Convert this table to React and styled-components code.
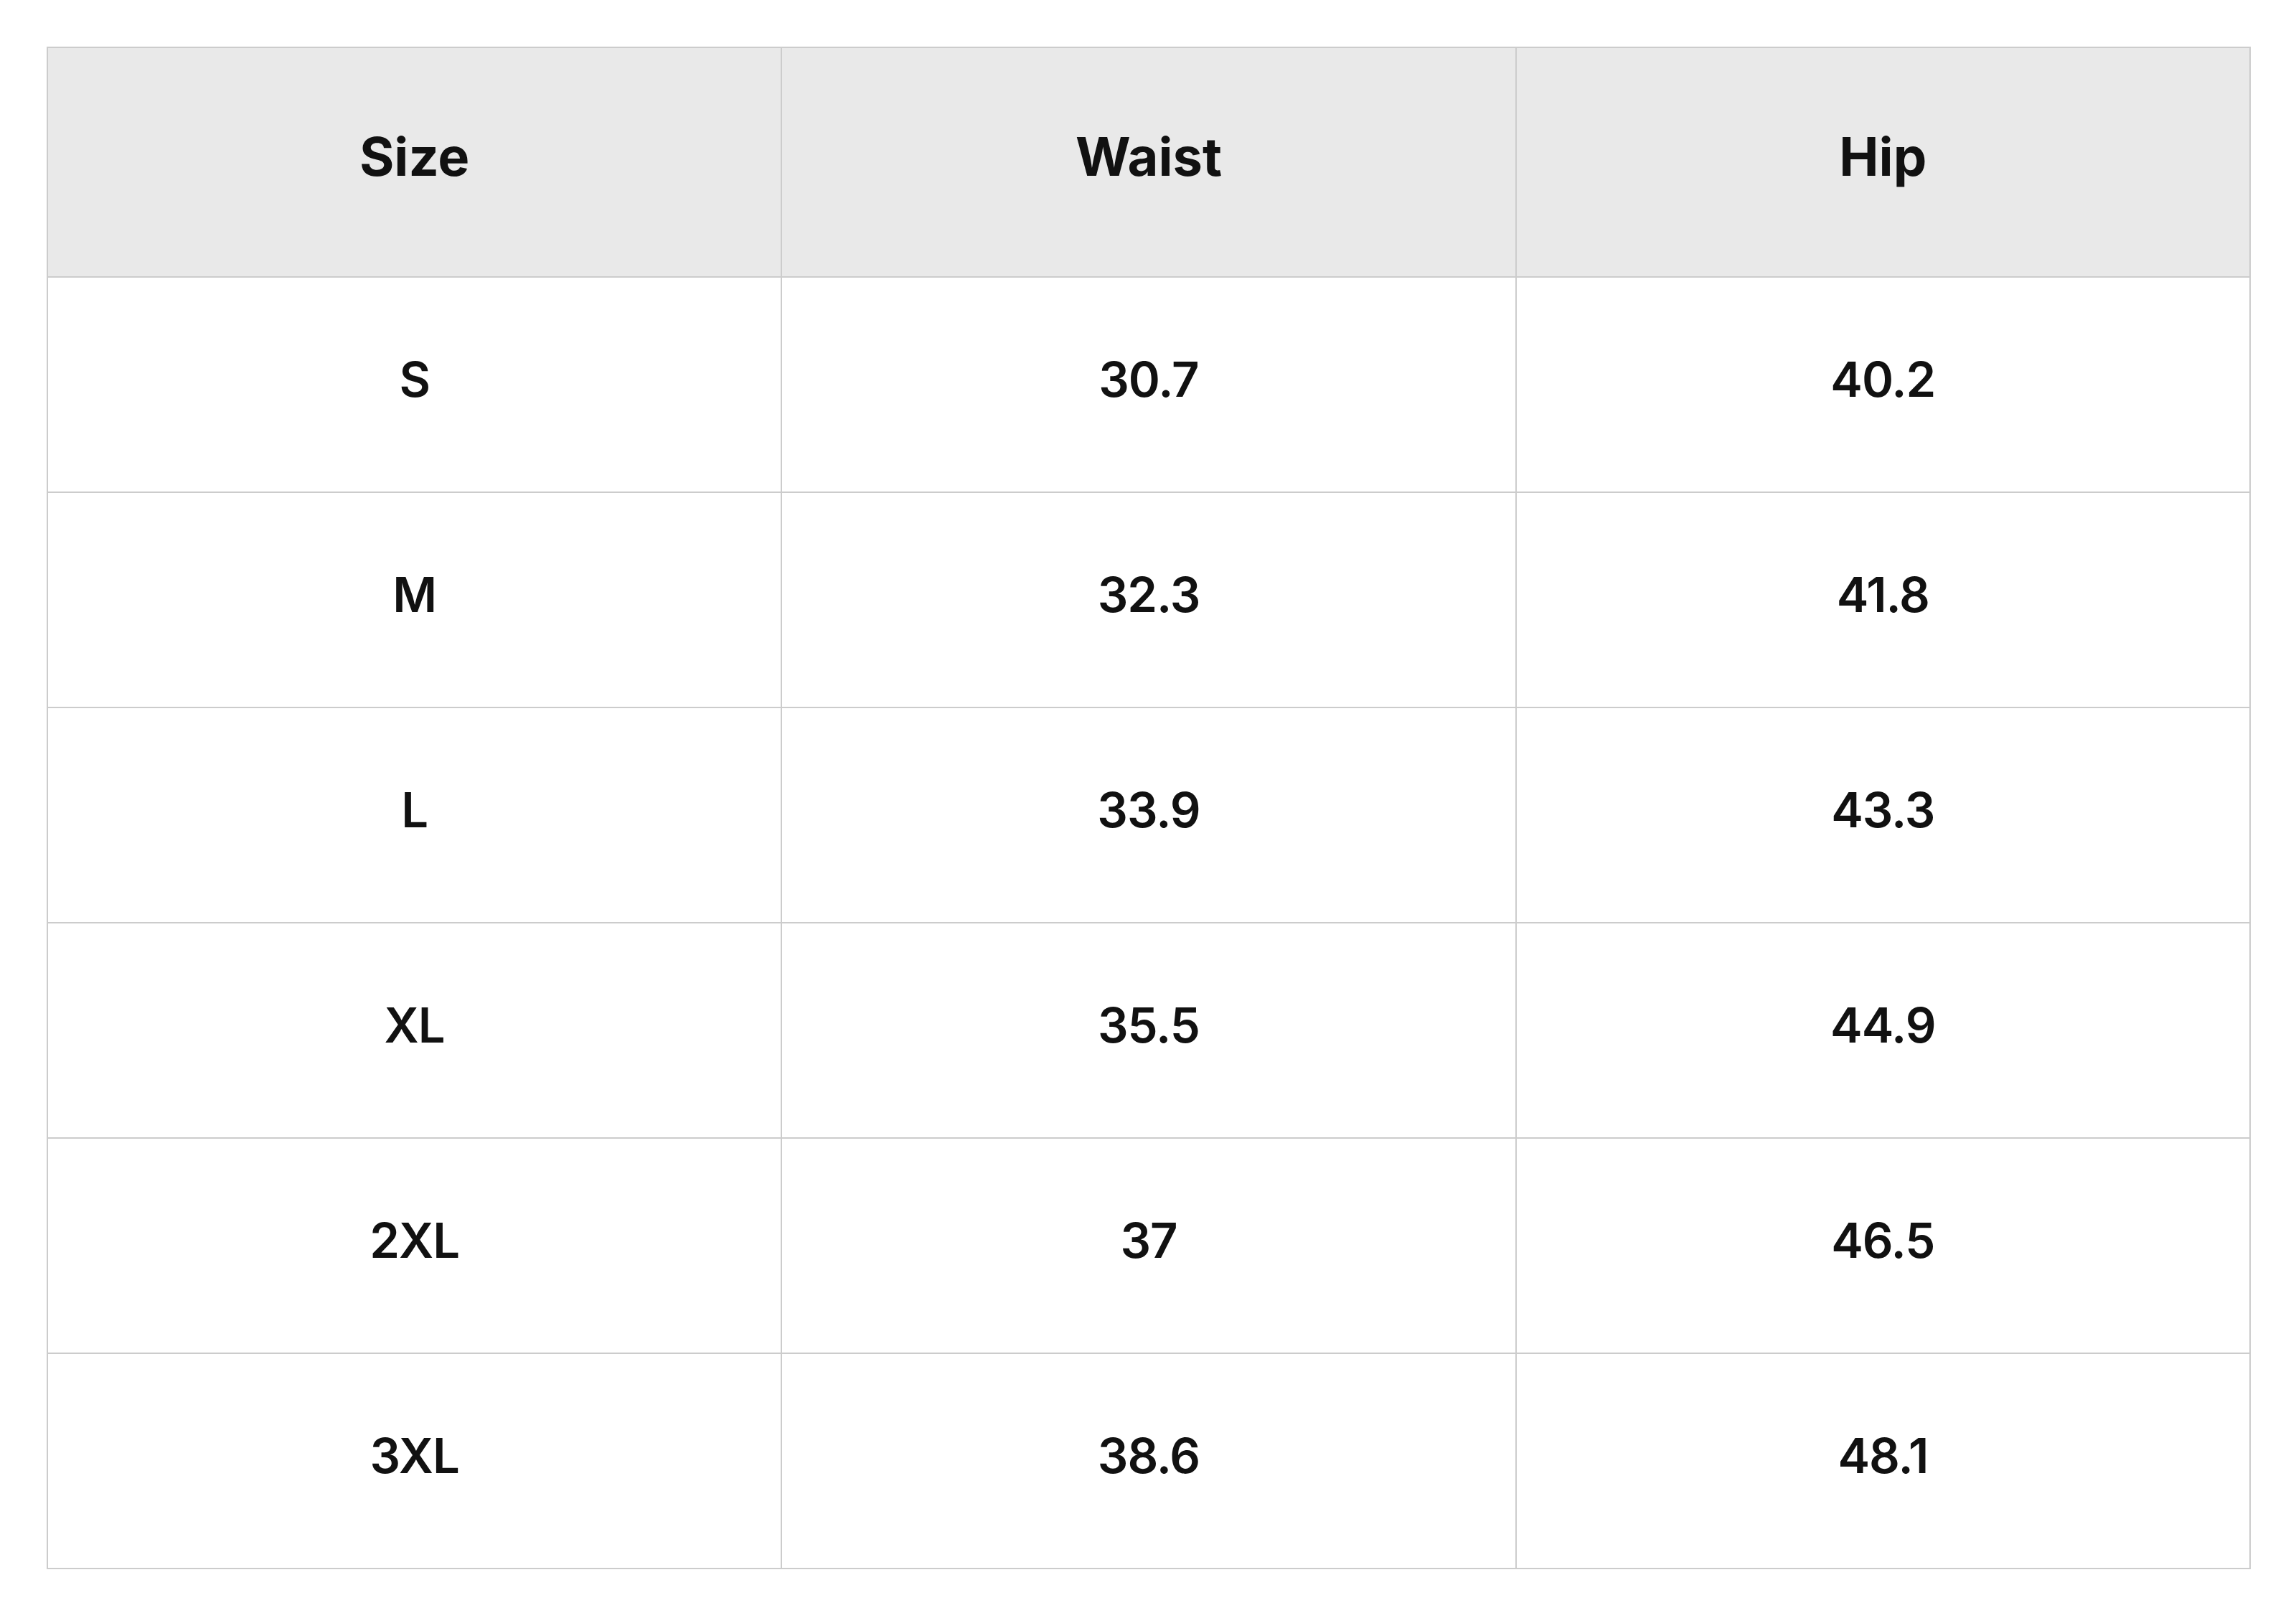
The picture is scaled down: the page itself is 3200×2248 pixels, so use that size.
import React from "react";
import styled, { createGlobalStyle } from "styled-components";

const GlobalStyle = createGlobalStyle`
  html, body {
    margin: 0;
    padding: 0;
    background: #ffffff;
  }
  body {
    font-family: Inter, "Noto Sans", "Liberation Sans", sans-serif;
    color: #111111;
  }
`;

const Page = styled.div`
  padding: 65px 63px 62px 65px;
`;

const Table = styled.table`
  width: 3072px;
  border-collapse: collapse;
  table-layout: fixed;
  border: 2px solid #cccccc;
`;

const Row = styled.tr`
  height: ${({ head }) => (head ? "320px" : "300px")};
`;

const HeadCell = styled.th`
  padding: 0 0 16px;
  background: #e9e9e9;
  border: 2px solid #cccccc;
  font-size: 74px;
  font-weight: 700;
  text-align: center;
  vertical-align: middle;
`;

const Cell = styled.td`
  padding: 0 0 16px;
  border: 2px solid #cccccc;
  font-size: 67px;
  font-weight: 600;
  letter-spacing: -1px;
  text-align: center;
  vertical-align: middle;
`;

const rows = [
  ["S", "30.7", "40.2"],
  ["M", "32.3", "41.8"],
  ["L", "33.9", "43.3"],
  ["XL", "35.5", "44.9"],
  ["2XL", "37", "46.5"],
  ["3XL", "38.6", "48.1"],
];

const App = () => (
  <Page>
    <GlobalStyle />
    <Table>
      <thead>
        <Row head>
          <HeadCell>Size</HeadCell>
          <HeadCell>Waist</HeadCell>
          <HeadCell>Hip</HeadCell>
        </Row>
      </thead>
      <tbody>
        {rows.map((row) => (
          <Row key={row[0]}>
            {row.map((value, i) => (
              <Cell key={i}>{value}</Cell>
            ))}
          </Row>
        ))}
      </tbody>
    </Table>
  </Page>
);

export default App;
